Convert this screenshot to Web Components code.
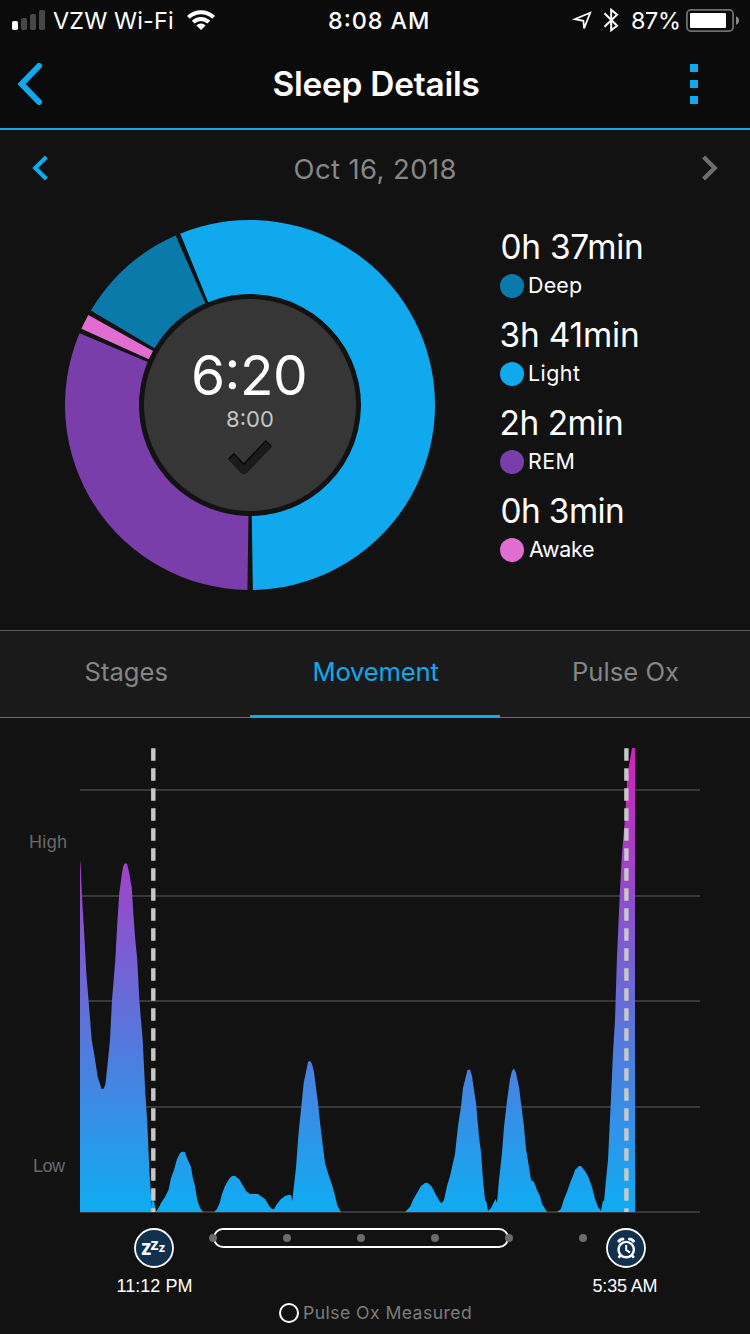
<!DOCTYPE html>
<html lang="en">
<head>
<meta charset="utf-8">
<title>Sleep Details</title>
<style>
body {
  margin: 0;
  width: 750px;
  height: 1334px;
  overflow: hidden;
  background: #121212;
  color: #fff;
  font-family: Inter, "Liberation Sans", sans-serif;
}
</style>
</head>
<body>
<sleep-app></sleep-app>

<template id="fit-text">
<style>
:host { display: block; flex: none; white-space: nowrap; }
span { display: block; }
</style>
<span><slot></slot></span>
</template>

<template id="status-bar">
<style>
:host { display: flex; align-items: center; height: 41px; background: #0b0b0b; font-size: 23.4px; line-height: 41px; }
svg { display: block; flex: none; }
.time { font-weight: 550; margin-left: 114px; font-feature-settings: "case"; }
</style>
<svg width="53" height="41">
  <rect x="12" y="21" width="6" height="9" rx="1.8" fill="#fff"/>
  <g fill="#474747">
    <rect x="21" y="18" width="6" height="12" rx="1.8"/>
    <rect x="30" y="14" width="6" height="16" rx="1.8"/>
    <rect x="39" y="10" width="6" height="20" rx="1.8"/>
  </g>
</svg>
<fit-text w="120">VZW Wi-Fi</fit-text>
<svg width="42" height="41" viewBox="173 0 42 41">
  <g fill="none" stroke="#fff" stroke-width="4">
    <path d="M188.4 17.4A17.8 17.8 0 0 1 213.6 17.4"/>
    <path d="M193.2 22.2A11 11 0 0 1 208.8 22.2"/>
  </g>
  <path fill="#fff" d="M201 30L196.4 25.4A6.6 6.6 0 0 1 205.6 25.4Z"/>
</svg>
<fit-text class="time" w="99">8:08 AM</fit-text>
<svg width="204" height="41" viewBox="428 0 204 41" fill="none" stroke="#fff">
  <path stroke-width="1.7" d="M590.2 12.8L574.8 19.2L583.4 20.8L584.1 28.4Z"/>
  <path stroke-width="2" d="M604.5 13.3L617.1 25.7L611.2 30.2V9.8L617.1 14.6L604.5 26.7"/>
</svg>
<fit-text w="47">87%</fit-text>
<svg width="71" height="41" viewBox="679 0 71 41">
  <rect x="686.9" y="9.9" width="46.2" height="21.2" rx="4" fill="none" stroke="#6f6f6f" stroke-width="1.8"/>
  <rect x="690" y="13" width="36" height="15" rx="1" fill="#fff"/>
  <path fill="#8a8a8a" d="M736 16.3Q739 17.5 739 20.5T736 24.8Z"/>
</svg>
</template>

<template id="nav-bar">
<style>
:host { display: grid; grid-template-columns: 60px 1fr 60px; align-items: center; height: 87px; background: #0b0b0b; border-bottom: 2px solid #10a9ee; }
svg { display: block; }
fit-text { justify-self: center; margin-left: 2px; font-size: 33.4px; font-weight: 570; line-height: 87px; }
</style>
<svg width="60" height="87" viewBox="0 41 60 87" fill="none" stroke="#10a9ee" stroke-width="6" stroke-linecap="round">
  <path d="M39 66L21.6 84L39 102"/>
</svg>
<fit-text w="205"><slot></slot></fit-text>
<svg width="60" height="87" viewBox="690 41 60 87" fill="#10a9ee">
  <path d="M690 64h8v8h-8zM690 80h8v8h-8zM690 96h8v8h-8z"/>
</svg>
</template>

<template id="date-pager">
<style>
:host { display: flex; align-items: center; justify-content: space-between; height: 78px; padding: 0 32px; }
svg { display: block; margin-top: -2px; }
fit-text { font-size: 27.4px; line-height: 78px; color: #878787; }
</style>
<svg width="16" height="26" fill="none" stroke="#10a9ee" stroke-width="4.3"><path d="M14.4 1.9L3.3 13L14.4 24.1"/></svg>
<fit-text w="161"><slot></slot></fit-text>
<svg width="16" height="26" fill="none" stroke="#6e6e6e" stroke-width="4.3"><path d="M1.6 1.9L12.7 13L1.6 24.1"/></svg>
</template>

<template id="sleep-donut">
<style>
:host { display: grid; width: 370px; height: 370px; }
svg, .center { grid-area: 1 / 1; }
.center { display: flex; flex-direction: column; align-items: center; padding-top: 125px; font-feature-settings: "case"; }
.total { font-size: 55px; line-height: 60px; margin-right: 1px; }
.goal { font-size: 22px; line-height: 28px; color: #c4c4c4; }
</style>
<svg id="ring" width="370" height="370" viewBox="-185 -185 370 370">
  <circle r="106" fill="#363636"/>
  <g transform="translate(-250 -405)">
    <path fill="#000" d="M228 458.7L234 453L243.7 463.3L265.7 440L272 446.3L246.7 472.7Q243.7 475 241 472.7Z"/>
    <path fill="#1b1b1b" d="M228.7 459.5L234 454.6L243.7 465L265.7 441.6L271.6 447L246.7 472.7Q243.7 475 241 472.7Z"/>
  </g>
</svg>
<div class="center">
  <fit-text class="total" w="111"></fit-text>
  <fit-text class="goal" w="46"></fit-text>
</div>
</template>

<template id="stage-total">
<style>
:host { display: block; height: 88px; }
.value { font-size: 33.4px; line-height: 41px; margin-left: 1.5px; }
.name { display: flex; align-items: center; gap: 5px; height: 36px; }
i { width: 24px; height: 24px; border-radius: 50%; background: var(--stage); }
.name fit-text { font-size: 21.4px; line-height: 35px; margin-top: -1px; }
</style>
<fit-text class="value"></fit-text>
<div class="name"><i></i><fit-text class="label"></fit-text></div>
</template>

<template id="tab-bar">
<style>
:host { display: grid; grid-template-columns: repeat(3, 1fr); height: 86px; background: #1a1a1a; border-top: 1px solid #585858; border-bottom: 1px solid #707070; }
</style>
<slot></slot>
</template>

<template id="tab-item">
<style>
:host { display: flex; justify-content: center; box-sizing: border-box; height: 87px; color: #858585; }
:host([active]) { color: #10a9ee; border-bottom: 3px solid #10a9ee; }
fit-text { font-size: 25.6px; line-height: 82px; margin-left: 3px; }
</style>
<fit-text><slot></slot></fit-text>
</template>

<template id="movement-chart">
<style>
:host { display: grid; grid-template-columns: 66px 620px; column-gap: 14px; height: 465px; padding-top: 30px; }
.axis { display: flex; flex-direction: column; justify-content: space-between; align-items: flex-end; padding: 84px 0 37px; color: #696969; font: 18px/20px "Liberation Sans", sans-serif; }
svg { display: block; }
</style>
<div class="axis"><fit-text w="36">High</fit-text><fit-text w="32">Low</fit-text></div>
<svg width="620" height="465" viewBox="80 748 620 465">
  <defs>
    <linearGradient id="heat" gradientUnits="userSpaceOnUse" x1="0" y1="748" x2="0" y2="1212">
      <stop offset="0" stop-color="#d320b8"/>
      <stop offset=".3" stop-color="#954aca"/>
      <stop offset="1" stop-color="#0eacf2"/>
    </linearGradient>
  </defs>
  <path fill="#383838" d="M80 789h620v2H80zM80 895h620v2H80zM80 1000h620v2H80zM80 1106h620v2H80zM80 1211h620v2H80z"/>
  <g id="areas" fill="url(#heat)"></g>
  <path fill="none" stroke="#c8c8c8" stroke-width="4.4" stroke-dasharray="12.6 7.4" d="M153.3 748.2V1212M626.4 748.2V1212"/>
</svg>
</template>

<template id="time-marker">
<style>
:host { display: flex; flex-direction: column; align-items: center; width: 78px; flex: none; }
fit-text { font: 18px/20px "Liberation Sans", sans-serif; margin-top: 8px; margin-left: 1px; }
:host([icon="alarm"]) fit-text { margin: 8px 2px 0 0; }
svg { display: block; }
.alarm, :host([icon="alarm"]) .sleep { display: none; }
:host([icon="alarm"]) .alarm { display: inline; }
</style>
<svg width="40" height="40" viewBox="-20 -20 40 40">
  <circle r="19" fill="#10304d" stroke="#fff" stroke-width="1.8"/>
  <g class="sleep" fill="#fff" font-family="Open Sans, sans-serif" font-weight="700">
    <text x="-12.8" y="7" font-size="20.5">z</text>
    <text x="-3.4" y="1.5" font-size="16.5">z</text>
    <text x="4.7" y="4" font-size="13">z</text>
  </g>
  <g class="alarm" fill="none" stroke="#fff" stroke-width="2.4">
    <circle cx=".2" cy="1.6" r="7.7"/>
    <path stroke-width="2" d="M.2 -3V2L4 4.6"/>
    <path stroke-width="2.6" d="M-5.4 7L-7.4 9.8M5.8 7L7.8 9.8"/>
    <path stroke-width="3.2" stroke-linecap="round" d="M-7 -7Q-5.4 -9 -3.2 -9M7.4 -7Q5.8 -9 3.6 -9"/>
  </g>
</svg>
<fit-text><slot></slot></fit-text>
</template>

<template id="time-axis">
<style>
:host { display: flex; height: 70px; padding: 15px 0 0 115px; }
svg { display: block; flex: none; margin-left: 16px; }
</style>
<time-marker icon="sleep" w="74">11:12 PM</time-marker>
<svg width="378" height="20" viewBox="209 1228 378 20">
  <rect x="214" y="1229" width="294" height="18" rx="9" fill="none" stroke="#fff" stroke-width="2"/>
  <g fill="#6b6b6b">
    <circle cx="213" cy="1238" r="4"/>
    <circle cx="287" cy="1238" r="4"/>
    <circle cx="361" cy="1238" r="4"/>
    <circle cx="435" cy="1238" r="4"/>
    <circle cx="509" cy="1238" r="4"/>
    <circle cx="583" cy="1238" r="4"/>
  </g>
</svg>
<time-marker icon="alarm" w="65">5:35 AM</time-marker>
</template>

<template id="ox-legend">
<style>
:host { display: flex; justify-content: center; align-items: center; gap: 5px; height: 30px; color: #7c7c7c; font-size: 17.6px; line-height: 30px; }
i { box-sizing: border-box; width: 20px; height: 20px; border: 2px solid #fff; border-radius: 50%; }
</style>
<i></i><fit-text w="167"><slot></slot></fit-text>
</template>

<template id="sleep-app">
<style>
:host { display: block; }
.summary { display: flex; gap: 65px; height: 410px; padding: 12px 0 0 65px; }
.totals { padding-top: 7px; }
</style>
<status-bar></status-bar>
<nav-bar>Sleep Details</nav-bar>
<date-pager>Oct 16, 2018</date-pager>
<div class="summary">
  <sleep-donut total="6:20" goal="8:00"></sleep-donut>
  <div class="totals">
    <stage-total value="0h 37min" vw="140.5" label="Deep" lw="53" style="--stage: #0a7aab"></stage-total>
    <stage-total value="3h 41min" vw="136.5" label="Light" lw="51" style="--stage: #10a9ee"></stage-total>
    <stage-total value="2h 2min" vw="120.5" label="REM" lw="44.5" style="--stage: #7a3eaa"></stage-total>
    <stage-total value="0h 3min" vw="121.5" label="Awake" lw="65" style="--stage: #e06dcf"></stage-total>
  </div>
</div>
<tab-bar>
  <tab-item w="82">Stages</tab-item>
  <tab-item w="124" active>Movement</tab-item>
  <tab-item w="105">Pulse Ox</tab-item>
</tab-bar>
<movement-chart></movement-chart>
<time-axis></time-axis>
<ox-legend>Pulse Ox Measured</ox-legend>
</template>

<script>
class BaseElement extends HTMLElement {
  connectedCallback() {
    if (this.shadowRoot) return;
    this.attachShadow({ mode: 'open' });
    const template = document.getElementById(this.localName);
    const content = template.content.cloneNode(true);
    this.setup(content);
    this.shadowRoot.appendChild(document.importNode(content, true));
    this.ready();
  }
  setup() {}
  ready() {}
}

const ctx = document.createElement('canvas').getContext('2d');

// Spreads the letters so that the visible ink is exactly `w` pixels wide.
class FitText extends BaseElement {
  ready() {
    const slot = this.shadowRoot.querySelector('slot');
    const text = slot.assignedNodes({ flatten: true }).map(n => n.textContent).join('').trim();
    const w = parseFloat(this.getAttribute('w') || this.getRootNode().host.getAttribute('w'));
    const style = getComputedStyle(this);
    ctx.font = `${style.fontWeight} ${style.fontSize} ${style.fontFamily}`;
    const m = ctx.measureText(text);
    const ink = m.actualBoundingBoxLeft + m.actualBoundingBoxRight;
    this.style.width = `${w}px`;
    this.style.letterSpacing = `${(w - ink) / (text.length - 1)}px`;
    this.shadowRoot.querySelector('span').style.marginLeft = `${m.actualBoundingBoxLeft}px`;
  }
}

class StageTotal extends BaseElement {
  setup(content) {
    const value = content.querySelector('.value');
    value.textContent = this.getAttribute('value');
    value.setAttribute('w', this.getAttribute('vw'));
    const label = content.querySelector('.label');
    label.textContent = this.getAttribute('label');
    label.setAttribute('w', this.getAttribute('lw'));
  }
}

// Angles are in degrees, clockwise from the top.
const STAGES = [
  { from: -22.15, to: 179.1, color: '#10a9ee' },
  { from: 180.8, to: 292.8, color: '#7a3eaa' },
  { from: 294.3, to: 299.1, color: '#e06dcf' },
  { from: 300.7, to: 336.3, color: '#0a7aab' },
];

class SleepDonut extends BaseElement {
  setup(content) {
    content.querySelector('.total').textContent = this.getAttribute('total');
    content.querySelector('.goal').textContent = this.getAttribute('goal');
    const point = (r, deg) => {
      const a = deg * Math.PI / 180;
      return `${(r * Math.sin(a)).toFixed(2)} ${(-r * Math.cos(a)).toFixed(2)}`;
    };
    const ring = content.querySelector('#ring');
    for (const { from, to, color } of STAGES) {
      const large = to - from > 180 ? 1 : 0;
      const path = document.createElementNS('http://www.w3.org/2000/svg', 'path');
      path.setAttribute('fill', color);
      path.setAttribute('d', `M${point(185, from)}A185 185 0 ${large} 1 ${point(185, to)}L${point(111, to)}A111 111 0 ${large} 0 ${point(111, from)}Z`);
      ring.appendChild(path);
    }
  }
}

const MOVEMENT = [
  '80,1212 80,860 80.7,866 82,897 84,930 86.3,973 89,1006 91.7,1040 94.7,1057 97.7,1077 100,1084 101.5,1089 103.3,1089 105.3,1085 107.3,1067 110,1040 112,1000 115.3,960 117.3,923 119.3,893 122,873 123.3,866 124.7,863.5 127,863.5 129,872 131.7,887 133.3,913 135.3,940 137.3,960 139.3,1000 142.7,1040 145.3,1093 147.3,1123 149.3,1170 151.7,1207 152.3,1200 154.3,1202 155.7,1212',
  '155.7,1212 158,1209 161,1203 165,1197 168.5,1190 171,1178 174,1170 177,1159 180,1153 182,1151.7 185,1152 187,1158 191,1167 193,1179 195,1186 197,1199 200,1208 203,1212',
  '214,1212 217,1209 220,1202 222,1194 225,1186 229,1179 232,1176 235,1176 239,1179 242,1184 246,1191 250,1194 258,1194 262,1197 265,1199 268,1204 270,1207 272,1209 274,1209 277,1204 281,1199 285,1196 288,1195 291,1195 292.3,1201 293,1194 296,1168 298,1140 300,1119 302,1100 303.7,1083 306,1072 308,1062 310,1060.7 312,1064 314,1072 316,1088 318,1103 320,1122 322,1139 325,1163 328,1173 333,1188 336,1200 338,1207 341,1212',
  '405,1212 410,1207 413,1200 417,1193 421,1186 425,1183 428,1183 432,1187 436,1195 440,1202 442,1203 444,1200 447,1186 450,1176 455,1154 458,1126 461,1107 463,1088 466,1076 467.5,1070 470,1069.5 472,1076 474,1090 476,1103 479,1137 481,1152 483,1180 485,1200 486.5,1202 488,1211 491,1208 494,1202 495.5,1199 497,1203 499,1180 502,1153 504,1127 507,1101 510,1079 512,1071 514,1068.5 516,1073 519,1087 521,1103 524,1127 526,1149 529,1167 531,1180 534,1182 537,1190 540,1196 542,1204 547,1212',
  '557,1212 561,1209 564,1199 567,1192 570,1183 573,1176 575,1170 579,1166 581,1166 585,1171 588,1176 592,1187 595,1199 598,1207 601,1211 603,1200 604,1202 606,1180 608,1160 611,1097 613,1053 615,1020 617,956 620,890 622,853 625,818 627,782 629,765 631,754 632,748 635,748 635,1212',
];

class MovementChart extends BaseElement {
  setup(content) {
    const areas = content.querySelector('#areas');
    for (const points of MOVEMENT) {
      const area = document.createElementNS('http://www.w3.org/2000/svg', 'polygon');
      area.setAttribute('points', points);
      areas.appendChild(area);
    }
  }
}

customElements.define('sleep-donut', SleepDonut);
customElements.define('stage-total', StageTotal);
customElements.define('movement-chart', MovementChart);
for (const name of ['status-bar', 'nav-bar', 'date-pager', 'tab-bar', 'tab-item', 'time-marker', 'time-axis', 'ox-legend', 'sleep-app']) {
  customElements.define(name, class extends BaseElement {});
}
customElements.define('fit-text', FitText);
</script>
</body>
</html>
